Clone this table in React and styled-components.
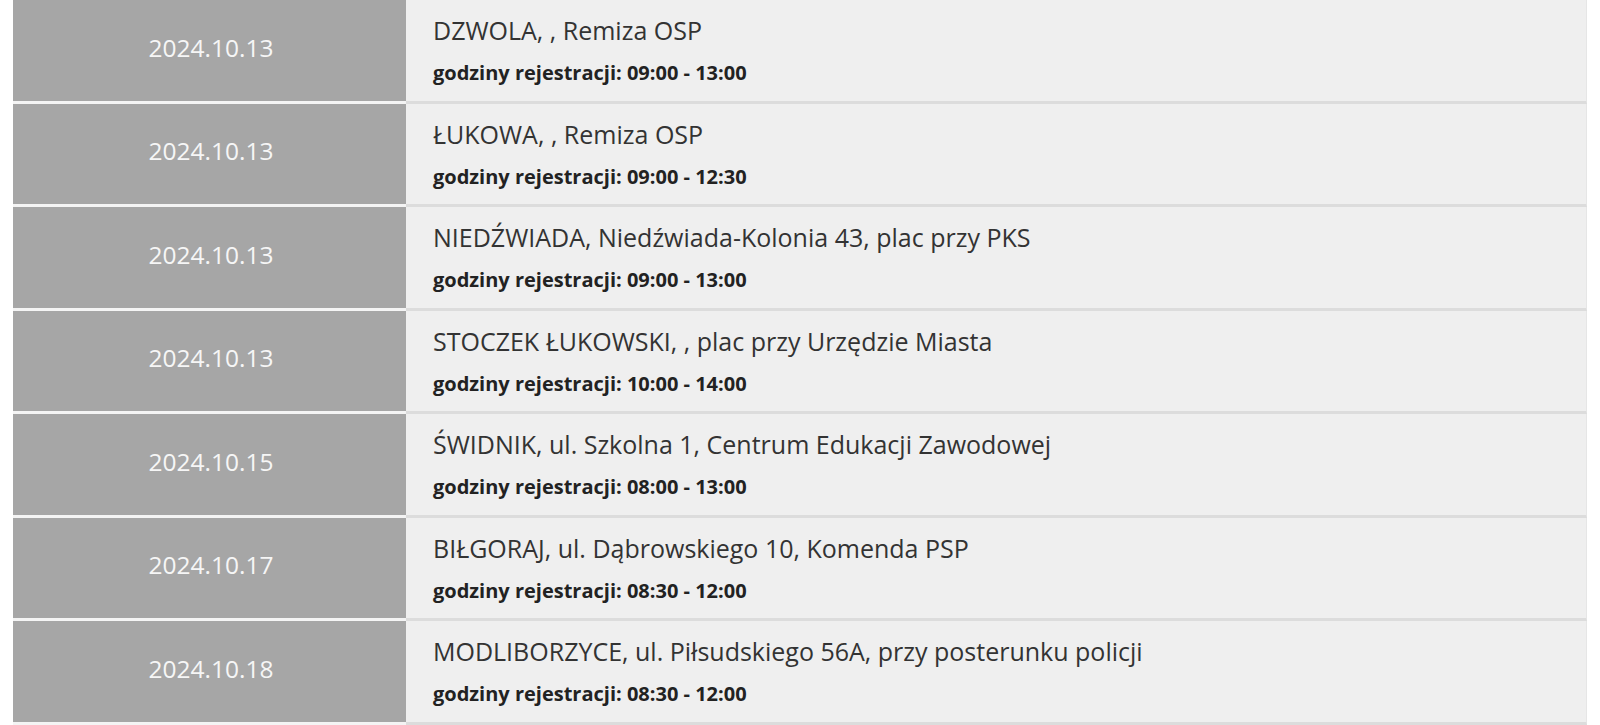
import React from 'react'
import styled, { createGlobalStyle } from 'styled-components'

const GlobalStyle = createGlobalStyle`
  html, body {
    margin: 0;
    padding: 0;
    background: #ffffff;
  }
  body {
    font-family: "Open Sans", "Liberation Sans", sans-serif;
  }
`

const List = styled.div`
  padding: 0 13px;
  display: flex;
  flex-direction: column;
`

const Row = styled.div`
  display: grid;
  grid-template-columns: 393px 1fr;
  height: 103.5px;
`

const DateCell = styled.div`
  background-color: #a6a6a6;
  border-bottom: 3.5px solid #f4f4f4;
  color: #f6f6f6;
  font-size: 24.5px;
  display: flex;
  align-items: center;
  justify-content: center;
  padding: 0 0 6px 3px;
`

const Info = styled.div`
  background-color: #efefef;
  border-bottom: 3.5px solid #dcdcdc;
  border-right: 1px solid #e6e6e6;
  padding: 14px 27px 0;
  display: flex;
  flex-direction: column;
`

const Place = styled.div`
  color: #333333;
  font-size: 25px;
  line-height: 32px;
`

const Hours = styled.div`
  color: #222222;
  font-size: 20px;
  font-weight: 700;
  margin-top: 14px;
  line-height: 26px;
`

const events = [
  { date: '2024.10.13', place: 'DZWOLA, , Remiza OSP', hours: '09:00 - 13:00' },
  { date: '2024.10.13', place: 'ŁUKOWA, , Remiza OSP', hours: '09:00 - 12:30' },
  { date: '2024.10.13', place: 'NIEDŹWIADA, Niedźwiada-Kolonia 43, plac przy PKS', hours: '09:00 - 13:00' },
  { date: '2024.10.13', place: 'STOCZEK ŁUKOWSKI, , plac przy Urzędzie Miasta', hours: '10:00 - 14:00' },
  { date: '2024.10.15', place: 'ŚWIDNIK, ul. Szkolna 1, Centrum Edukacji Zawodowej', hours: '08:00 - 13:00' },
  { date: '2024.10.17', place: 'BIŁGORAJ, ul. Dąbrowskiego 10, Komenda PSP', hours: '08:30 - 12:00' },
  { date: '2024.10.18', place: 'MODLIBORZYCE, ul. Piłsudskiego 56A, przy posterunku policji', hours: '08:30 - 12:00' },
]

const App = () => {
  return (
    <>
      <GlobalStyle />
      <List>
        {events.map((ev, i) => (
          <Row key={i}>
            <DateCell>{ev.date}</DateCell>
            <Info>
              <Place>{ev.place}</Place>
              <Hours>godziny rejestracji: {ev.hours}</Hours>
            </Info>
          </Row>
        ))}
      </List>
    </>
  )
}

export default App
